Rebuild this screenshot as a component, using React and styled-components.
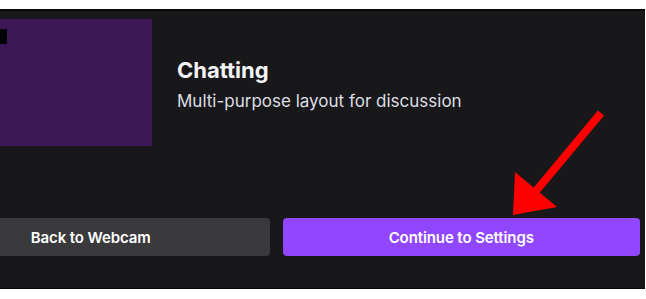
import styled, { createGlobalStyle } from 'styled-components';

const GlobalStyle = createGlobalStyle`
  html, body {
    margin: 0;
    background: #ffffff;
    overflow: hidden;
  }
  body {
    font-family: Inter, "Noto Sans", sans-serif;
  }
`;

const Frame = styled.div`
  position: relative;
  margin-top: 9px;
  margin-left: -88px;
  width: 733px;
  background: #18181b;
  border-top: 2px solid #0a0a0b;
  border-bottom: 1px solid #050505;
  display: flex;
  flex-direction: column;
  padding: 8px 5px 32px 0;
  box-sizing: border-box;
`;

const LayoutRow = styled.div`
  display: flex;
  align-items: center;
  gap: 25px;
  padding-left: 14px;
`;

const Thumbnail = styled.div`
  position: relative;
  width: 226px;
  height: 127px;
  background: #3e1757;
  flex-shrink: 0;
`;

const Marker = styled.div`
  position: absolute;
  left: 74px;
  top: 10px;
  width: 7px;
  height: 15px;
  background: #000;
`;

const Info = styled.div`
  display: flex;
  flex-direction: column;
  gap: 8px;
  padding-top: 2px;
`;

const Title = styled.div`
  color: #f4f4f5;
  font-size: 22px;
  font-weight: 700;
  line-height: 26px;
`;

const Subtitle = styled.div`
  color: #dedee3;
  font-size: 17px;
  line-height: 20px;
`;

const Actions = styled.div`
  display: grid;
  grid-template-columns: 1fr 1fr;
  gap: 13px;
  margin-top: 72px;
`;

const Button = styled.button`
  height: 38px;
  border: none;
  border-radius: 4px;
  background: ${(p) => (p.$primary ? '#9147ff' : '#3a3a3d')};
  color: #ffffff;
  font-family: Inter, "Noto Sans", sans-serif;
  font-size: 15px;
  font-weight: 600;
  letter-spacing: -0.1px;
  cursor: pointer;
`;

const Arrow = styled.svg`
  position: absolute;
  left: 588px;
  top: 94px;
`;

export default function App() {
  return (
    <>
      <GlobalStyle />
      <Frame>
        <LayoutRow>
          <Thumbnail>
            <Marker />
          </Thumbnail>
          <Info>
            <Title>Chatting</Title>
            <Subtitle>Multi-purpose layout for discussion</Subtitle>
          </Info>
        </LayoutRow>
        <Actions>
          <Button>Back to Webcam</Button>
          <Button $primary>Continue to Settings</Button>
        </Actions>
        <Arrow width="112" height="116" viewBox="0 0 112 116">
          <line x1="101" y1="8" x2="36" y2="86" stroke="#ff0000" strokeWidth="8" />
          <polygon points="13,110 15,67 57,102" fill="#ff0000" />
        </Arrow>
      </Frame>
    </>
  );
}
